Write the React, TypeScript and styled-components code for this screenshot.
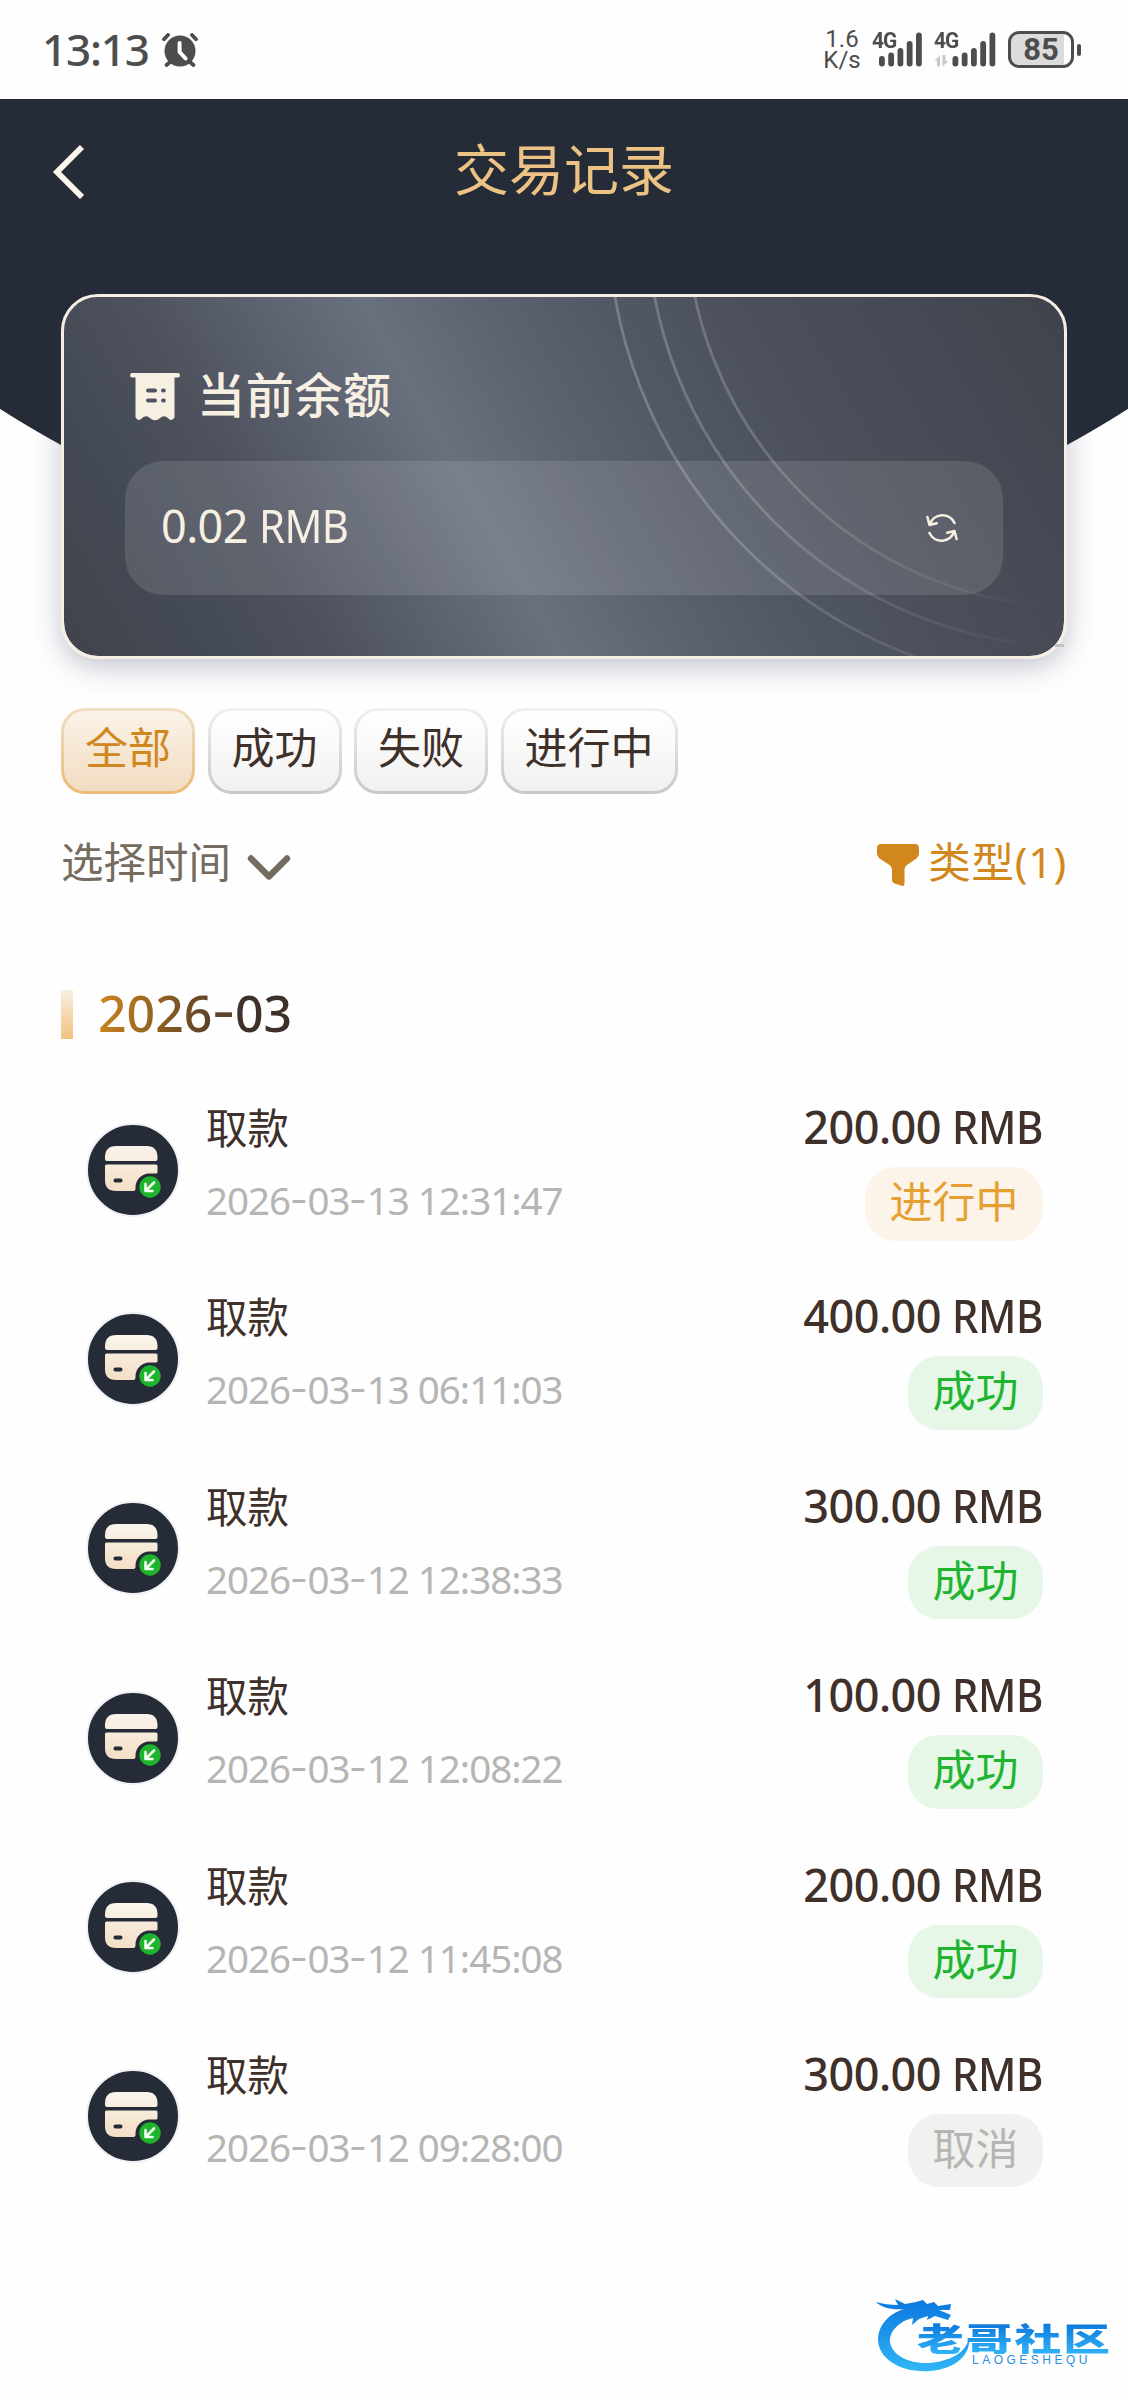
import React from "react";
import styled, { createGlobalStyle } from "styled-components";

const GlobalStyle = createGlobalStyle`
  * { box-sizing: border-box; }
  html, body { margin: 0; padding: 0; background: #fefefe; }
  body { font-family: "Noto Sans", "Noto Sans CJK SC", sans-serif; }
  svg { display: block; flex: none; }
`;

const Page = styled.main`
  position: relative;
  width: 1128px;
  height: 2400px;
  overflow: hidden;
  background: #fefefe;
  color: #3f302a;
`;

/* ---------- status bar ---------- */

const StatusBar = styled.div`
  height: 99px;
  display: flex;
  align-items: center;
  padding: 0 47px 0 42px;
  color: #4d4d4d;
  font-family: Roboto, sans-serif;
`;

const Clock = styled.span`
  font: 500 44px/60px "Noto Sans", sans-serif;
  letter-spacing: -1.2px;
  margin: -2px 13px 0 0;
`;

const Speed = styled.div`
  margin-left: auto;
  width: 36px;
  margin-right: 12px;
  display: flex;
  flex-direction: column;
  align-items: center;
  font-size: 24px;
  line-height: 21px;
`;

const Signal = styled.div<{ $wide?: boolean }>`
  position: relative;
  width: ${(p) => (p.$wide ? 62 : 52)}px;
  height: 36px;
  margin-right: ${(p) => (p.$wide ? 12 : 10)}px;
`;

const SignalLabel = styled.span`
  position: absolute;
  left: 0;
  top: -2px;
  font: 700 22px/22px Roboto, sans-serif;
  letter-spacing: -1px;
  transform: scaleX(0.95);
  transform-origin: left;
`;

const Battery = styled.div`
  display: flex;
  align-items: center;
  gap: 3px;
`;

const BatteryBody = styled.div`
  width: 66px;
  height: 37px;
  border: 3px solid #4d4d4d;
  border-radius: 11px;
  background: linear-gradient(90deg, #dcdcdc 88%, #fff 88%);
  font: 700 31px/32px Roboto, sans-serif;
  text-align: center;
`;

const BatteryTip = styled.div`
  width: 4px;
  height: 12px;
  border-radius: 2px;
  background: #4d4d4d;
`;

/* ---------- header and balance card ---------- */

const Hero = styled.header`
  height: 560px;
  padding: 0 61px;
  background: radial-gradient(circle 1049px at 564px -574px, #252b37 1048px, transparent 1049px) no-repeat;
`;

const NavBar = styled.nav`
  display: grid;
  grid-template-columns: 60px 1fr 60px;
  align-items: center;
  height: 144px;
  margin: 0 -10px 51px;
`;

const Title = styled.h1`
  margin: 0 0 11px;
  text-align: center;
  font: 400 55px/80px "Noto Sans CJK SC", sans-serif;
  color: #ecc384;
`;

const Card = styled.section`
  position: relative;
  height: 365px;
  padding: 62px 61px 0;
  border: 3px solid #f6ede3;
  border-radius: 37px;
  background: linear-gradient(60.5deg, #40434b 0%, #444a55 12%, #4c515c 22%, #5b616e 32%, #6a717e 41.5%, #5c6270 52%, #515764 62%, #494e59 76%, #444852 90%, #40434b 100%) padding-box;
  box-shadow: 0 8px 28px rgba(52, 64, 92, 0.3);
`;

const Rings = styled.svg`
  position: absolute;
  inset: 0;
  border-radius: 34px;
  pointer-events: none;
`;

const RingTail = styled.span`
  position: absolute;
  right: 0;
  bottom: 9px;
  width: 9px;
  height: 3px;
  background: #c4c3c3;
`;

const CardTitle = styled.h2`
  display: flex;
  align-items: center;
  gap: 17px;
  margin: 0 0 35px 5px;
  height: 67px;
  font: 500 48px/67px "Noto Sans CJK SC", sans-serif;
  letter-spacing: 0.7px;
  color: #f8efe3;

  svg { margin-top: 8px; }
`;

const Balance = styled.div`
  display: flex;
  align-items: center;
  justify-content: space-between;
  height: 134px;
  padding: 0 45px 0 36px;
  border-radius: 38px;
  background: rgba(255, 255, 255, 0.115);
  color: #f8efe3;
  font-size: 45px;
  line-height: 60px;
  letter-spacing: -0.6px;
`;

const BalanceValue = styled.span`
  padding-bottom: 5px;
  white-space: pre;
`;

const Unit = styled.span`
  display: inline-block;
  margin-right: -7px;
  transform: scaleX(0.93);
  transform-origin: left;
`;

/* ---------- filters ---------- */

const Tabs = styled.div`
  display: flex;
  gap: 12.500px;
  margin: 49px 61px 0;
`;

const Tab = styled.button<{ $active?: boolean }>`
  height: 86px;
  padding: 0 21px 11px;
  border: 3px solid transparent;
  border-radius: 24px;
  font: 400 43px/69px "Noto Sans CJK SC", sans-serif;
  color: ${(p) => (p.$active ? "#d1871f" : "#3f302a")};
  background: ${(p) =>
    p.$active
      ? "linear-gradient(#fbf3e8, #f1dcc1) padding-box, linear-gradient(#eedfc6, #ecba78) border-box"
      : "linear-gradient(#ffffff, #f1f1f0) padding-box, linear-gradient(#f0f0f0, #c8c8c8) border-box"};
`;

const Filters = styled.div`
  display: flex;
  justify-content: space-between;
  align-items: center;
  height: 60px;
  margin: 38px 61px 98px;
`;

const FilterButton = styled.div<{ $accent?: boolean }>`
  display: flex;
  align-items: center;
  gap: ${(p) => (p.$accent ? 9 : 16)}px;
  font: 400 42.5px/60px "Noto Sans", "Noto Sans CJK SC", sans-serif;
  letter-spacing: ${(p) => (p.$accent ? 0.8 : 0)}px;
  color: ${(p) => (p.$accent ? "#d2871d" : "#756b5f")};

  svg { margin-top: ${(p) => (p.$accent ? 6 : 11)}px; }
`;

/* ---------- records ---------- */

const Month = styled.h3`
  display: flex;
  align-items: center;
  gap: 25px;
  height: 49px;
  margin: 0 61px 36px;
`;

const MonthBar = styled.span`
  width: 12px;
  height: 49px;
  background: linear-gradient(#f8efe3, #f2c27d);
`;

const Hyphen = styled.span`
  display: inline-block;
  width: 0.45em;
  padding-left: 0.07em;
  transform: translateY(-0.08em) scaleX(1.35);
`;

const MonthText = styled.span`
  margin-bottom: 4px;
  font: 500 50px/60px "Noto Sans", sans-serif;
  background: linear-gradient(100deg, #d2871d 0%, #3f302a 72%);
  -webkit-background-clip: text;
  background-clip: text;
  color: transparent;

  ${Hyphen} { color: #5e4327; }
`;

const Row = styled.article`
  display: flex;
  align-items: flex-start;
  height: 189.4px;
  padding: 23px 85px 0 86px;
`;

const RowIcon = styled.div`
  width: 94px;
  height: 94px;
  margin: 24.5px 27px 0 0;
  border-radius: 50%;
  border: 2.5px solid #eff1f5;
  background: #252b37;
`;

const Info = styled.div`
  flex: 1;
  display: flex;
  flex-direction: column;
  gap: 14px;
  margin: -2px 0 0 -1px;
`;

const Kind = styled.span`
  font: 400 41.5px/60px "Noto Sans CJK SC", sans-serif;
`;

const Time = styled.span`
  font-size: 38.5px;
  line-height: 60px;
  letter-spacing: -1px;
  color: #b6b5b3;
`;

const Result = styled.div`
  display: flex;
  flex-direction: column;
  align-items: flex-end;
  gap: 9px;
`;

const Amount = styled.span`
  margin-top: -1px;
  padding-bottom: 1px;
  font-size: 45px;
  font-weight: 500;
  line-height: 60px;
  letter-spacing: -0.5px;
  white-space: pre;
`;

type Status = "pending" | "success" | "cancelled";

const tones: Record<Status, { fg: string; bg: string; label: string }> = {
  pending: { fg: "#e6a032", bg: "#fdf4e9", label: "进行中" },
  success: { fg: "#20b42f", bg: "#e6f6e7", label: "成功" },
  cancelled: { fg: "#b6b5b3", bg: "#f1f1f0", label: "取消" },
};

const Badge = styled.span<{ $status: Status }>`
  height: 73.5px;
  padding: 0 24.5px;
  border-radius: 31px;
  font: 400 43px/64px "Noto Sans CJK SC", sans-serif;
  color: ${(p) => tones[p.$status].fg};
  background: ${(p) => tones[p.$status].bg};
`;

/* ---------- watermark ---------- */

const Watermark = styled.aside`
  position: absolute;
  left: 874px;
  top: 2292px;
  width: 240px;
  height: 84px;
`;

const Dragon = styled.svg`
  position: absolute;
  inset: 0;
`;

const Brand = styled.span`
  position: absolute;
  left: 43px;
  top: 28px;
  font: 900 32px/34px "Noto Sans CJK SC", sans-serif;
  letter-spacing: 1.4px;
  white-space: nowrap;
  transform: scaleX(1.46);
  transform-origin: left;
  background: linear-gradient(#0c78dc 10%, #2fb0f6 95%);
  -webkit-background-clip: text;
  background-clip: text;
  color: transparent;
`;

const BrandLatin = styled.span`
  position: absolute;
  left: 98px;
  top: 61px;
  font: 400 12px/14px "Liberation Sans", sans-serif;
  letter-spacing: 3.5px;
  color: #2a8fe0;
`;

/* ---------- drawings ---------- */

const AlarmIcon = () => (
  <svg width="36" height="36" viewBox="0 0 36 36" fill="none" strokeLinecap="round">
    <circle cx="18" cy="19" r="15.5" fill="#4d4d4d" />
    <path d="M2 7.200 6 3M34 7.200 30 3M8 30 4.600 33M28 30l3.400 3" stroke="#4d4d4d" strokeWidth="3.800" />
    <path d="M17.600 11v9l6 6.500" stroke="#fff" strokeWidth="4" strokeLinejoin="round" />
  </svg>
);

const Bars = ({ x, traffic }: { x: number; traffic?: boolean }) => (
  <svg width="64" height="36" viewBox="0 0 64 36" fill="#4d4d4d">
    {[24, 20.5, 16, 9, 0.5].map((top, i) => (
      <rect key={top} x={x + i * 9.25} y={top} width="5.8" height={34.5 - top} rx="2.9" />
    ))}
    {traffic && <path d="M6 34.500V23L.500 29H3V34.500ZM8.500 23V34.500L14.500 29H11.500V23Z" fill="#c9c9c9" />}
  </svg>
);

const BackIcon = () => (
  <svg width="36" height="56" viewBox="0 0 36 56" fill="none">
    <path d="M31 4 6 29 31 54" stroke="#fbf5ee" strokeWidth="5.800" />
  </svg>
);

const BillIcon = () => (
  <svg width="50" height="48" viewBox="0 0 50 48">
    <path fill="#f8efe3" d="M2.200 0H47.800a2.200 2.200 0 0 1 0 4.400H44.500V44.500q-2.500 4-5.500 1.500l-2.500-2q-2.500-1.600-5 0l-3 2.200q-3.500 2-7 0l-3-2.200q-2.500-1.600-5 0l-2.500 2q-3 2.500-5.500-1.500V4.400H2.200a2.200 2.200 0 0 1 0-4.400Z" />
    <path d="M18 17.500h7M33 17.500h.8M18 27.500h7M33 27.500h.8" stroke="#4f5560" strokeWidth="4" strokeLinecap="round" />
  </svg>
);

const RefreshIcon = () => (
  <svg width="32" height="32" viewBox="0 0 32 32" fill="none" stroke="#f8efe3" strokeWidth="2.500" strokeLinecap="round" strokeLinejoin="round">
    <path d="M28.500 11A13.300 13.300 0 0 0 3.800 12.500M1.400 5l2.100 8 7.300-1.800" />
    <path d="M3.500 21a13.300 13.300 0 0 0 24.700-1.500M30.600 27l-2.100-8-7.300 1.800" />
  </svg>
);

const ChevronIcon = () => (
  <svg width="44" height="28" viewBox="0 0 44 28" fill="none">
    <path d="M4 4.500 22 22.500 40 4.500" stroke="#756b5f" strokeWidth="6.400" strokeLinecap="round" strokeLinejoin="round" />
  </svg>
);

const FunnelIcon = () => (
  <svg width="42" height="42" viewBox="0 0 42 42" fill="#d2871d">
    <path d="M4 0H38a4 4 0 0 1 4 4V9.500q0 3-2.600 5L30 21q-2.500 1.900-2.500 4.500V39.500q0 3.200-3 2.300l-7-2.300q-2.500-.8-2.500-3.500V25.500q0-2.600-2.500-4.500L2.600 14.500Q0 12.500 0 9.500V4a4 4 0 0 1 4-4Z" />
  </svg>
);

const CardIcon = () => (
  <svg width="89" height="89" viewBox="0 0 89 89">
    <defs>
      <linearGradient id="cream" x1="0" y1="21" x2="0" y2="67" gradientUnits="userSpaceOnUse">
        <stop offset="0" stopColor="#fbf5ed" />
        <stop offset="1" stopColor="#f2dec3" />
      </linearGradient>
    </defs>
    <path fill="url(#cream)" d="M28 21H58.500Q69.500 21 69.500 32.500V34q0 2-2 2H19q-2 0-2-2V32.500Q17 21 28 21Z" />
    <path fill="url(#cream)" d="M18.500 39.500H68q1.500 0 1.500 1.500V47q0 1.500-1.500 1.500H61A14 14 0 0 0 47.500 62.500v1.500q0 2-2 2H28Q17 66 17 55V41q0-1.500 1.500-1.500Z" />
    <rect x="25.500" y="53.500" width="9" height="4" rx="2" fill="#252b37" />
    <circle cx="62" cy="62" r="10.700" fill="#1fb42d" />
    <path d="m66 57.500-8 8M57.500 59v7h7" fill="none" stroke="#f3fff2" strokeWidth="2.600" strokeLinecap="round" strokeLinejoin="round" />
  </svg>
);

const Stamp = ({ value }: { value: string }) => (
  <>
    {value.split("-").map((part, i) => (
      <React.Fragment key={i}>
        {i > 0 && <Hyphen>-</Hyphen>}
        {part}
      </React.Fragment>
    ))}
  </>
);

const records: { amount: string; time: string; status: Status }[] = [
  { amount: "200.00", time: "2026-03-13 12:31:47", status: "pending" },
  { amount: "400.00", time: "2026-03-13 06:11:03", status: "success" },
  { amount: "300.00", time: "2026-03-12 12:38:33", status: "success" },
  { amount: "100.00", time: "2026-03-12 12:08:22", status: "success" },
  { amount: "200.00", time: "2026-03-12 11:45:08", status: "success" },
  { amount: "300.00", time: "2026-03-12 09:28:00", status: "cancelled" },
];

export default function App() {
  return (
    <Page>
      <GlobalStyle />
      <StatusBar>
        <Clock>13:13</Clock>
        <AlarmIcon />
        <Speed>
          <span>1.6</span>
          <span>K/s</span>
        </Speed>
        <Signal>
          <SignalLabel>4G</SignalLabel>
          <Bars x={7} />
        </Signal>
        <Signal $wide>
          <SignalLabel>4G</SignalLabel>
          <Bars x={18.5} traffic />
        </Signal>
        <Battery>
          <BatteryBody>85</BatteryBody>
          <BatteryTip />
        </Battery>
      </StatusBar>

      <Hero>
        <NavBar>
          <BackIcon />
          <Title>交易记录</Title>
        </NavBar>
        <Card>
          <CardTitle>
            <BillIcon />
            当前余额
          </CardTitle>
          <Balance>
            <BalanceValue>
              0.02 <Unit>RMB</Unit>
            </BalanceValue>
            <RefreshIcon />
          </Balance>
          <Rings width="1000" height="359" viewBox="64 297 1000 359">
            <defs>
              <linearGradient id="fade" x1="640" y1="0" x2="1050" y2="0" gradientUnits="userSpaceOnUse">
                <stop offset="0" stopColor="#fff" stopOpacity="0.22" />
                <stop offset="0.35" stopColor="#fff" stopOpacity="0.17" />
                <stop offset="0.7" stopColor="#fff" stopOpacity="0.08" />
                <stop offset="1" stopColor="#fff" stopOpacity="0" />
              </linearGradient>
            </defs>
            {[391.5, 431, 470].map((r) => (
              <circle key={r} cx="1078" cy="216" r={r} fill="none" stroke="url(#fade)" strokeWidth="2.800" />
            ))}
          </Rings>
          <RingTail />
        </Card>
      </Hero>

      <Tabs>
        <Tab $active>全部</Tab>
        <Tab>成功</Tab>
        <Tab>失败</Tab>
        <Tab>进行中</Tab>
      </Tabs>

      <Filters>
        <FilterButton>
          选择时间
          <ChevronIcon />
        </FilterButton>
        <FilterButton $accent>
          <FunnelIcon />
          类型(1)
        </FilterButton>
      </Filters>

      <Month>
        <MonthBar />
        <MonthText>
          <Stamp value="2026-03" />
        </MonthText>
      </Month>

      {records.map((r) => (
        <Row key={r.time}>
          <RowIcon>
            <CardIcon />
          </RowIcon>
          <Info>
            <Kind>取款</Kind>
            <Time>
              <Stamp value={r.time} />
            </Time>
          </Info>
          <Result>
            <Amount>
              {r.amount} <Unit>RMB</Unit>
            </Amount>
            <Badge $status={r.status}>{tones[r.status].label}</Badge>
          </Result>
        </Row>
      ))}

      <Watermark>
        <Dragon width="240" height="84" viewBox="0 0 240 84">
          <defs>
            <linearGradient id="sea" x1="0" y1="8" x2="0" y2="80" gradientUnits="userSpaceOnUse">
              <stop offset="0" stopColor="#0b78e0" />
              <stop offset="1" stopColor="#31b6f7" />
            </linearGradient>
          </defs>
          <path
            fill="url(#sea)"
            d="M2 10Q12 13 24 13L21 7L31 12Q37 11 42 10L49 8L53 12L60 10L64 14L77 12L76 18L65 18L77 23L74 28L61 24L53 28L54 24L45 27L38 33L39 26C25 29 15 40 16 50C18 64 36 72 56 71C76 69 92 61 95 46C97 62 82 77 56 79C28 81 5 68 4 48C4 34 14 22 30 17C18 18 8 16 2 10Z"
          />
        </Dragon>
        <Brand>老哥社区</Brand>
        <BrandLatin>LAOGESHEQU</BrandLatin>
      </Watermark>
    </Page>
  );
}
